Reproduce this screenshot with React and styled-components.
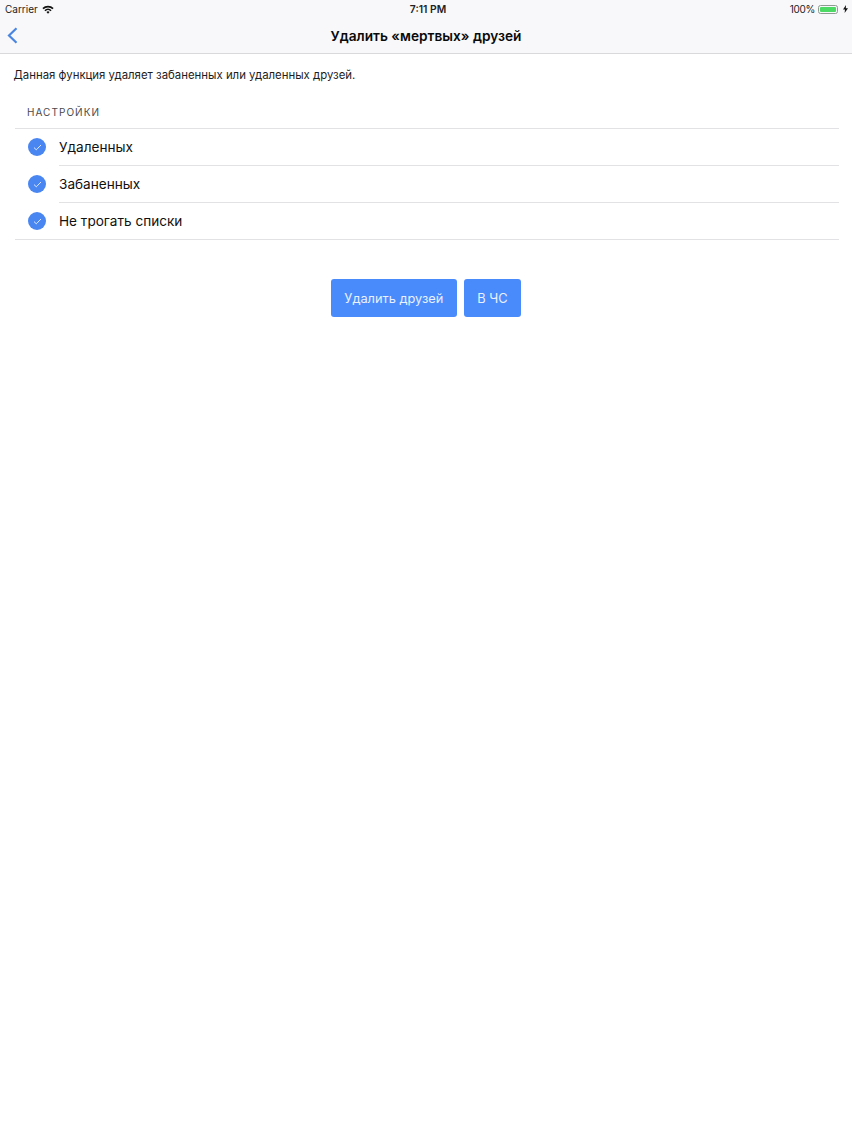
import React from 'react';
import styled, { createGlobalStyle } from 'styled-components';

const GlobalStyle = createGlobalStyle`
  html, body {
    margin: 0;
    padding: 0;
    background: #fff;
  }
  body {
    font-family: Inter, "Liberation Sans", sans-serif;
    color: #000;
  }
`;

const Page = styled.div`
  width: 852px;
  height: 1136px;
  overflow: hidden;
  background: #fff;
`;

const Header = styled.header`
  height: 53px;
  background: #f8f8fa;
  border-bottom: 1px solid #d9d9dc;
`;

const StatusBar = styled.div`
  height: 18px;
  padding: 0 4px 0 5px;
  display: grid;
  grid-template-columns: 1fr auto 1fr;
  align-items: center;
  font-size: 10px;
  color: #222;
`;

const StatusLeft = styled.div`
  display: flex;
  align-items: center;
  gap: 4px;
`;

const StatusTime = styled.div`
  margin-left: 3px;
  font-size: 10.3px;
  font-weight: 600;
`;

const StatusRight = styled.div`
  display: flex;
  align-items: center;
  justify-content: flex-end;
  gap: 2.5px;
  letter-spacing: -0.3px;
`;

const Battery = styled.div`
  width: 20px;
  height: 9px;
  margin-right: 3px;
  padding: 1px;
  box-sizing: border-box;
  border: 1px solid #8f9a90;
  border-radius: 2.5px;

  &::before {
    content: '';
    display: block;
    height: 100%;
    border-radius: 1px;
    background: #4cd964;
  }
`;

const NavBar = styled.div`
  height: 35px;
  display: grid;
  grid-template-columns: 60px 1fr 60px;
  align-items: center;
`;

const BackButton = styled.button`
  width: 26px;
  height: 35px;
  padding: 0 0 0 7px;
  display: flex;
  align-items: center;
  background: none;
  border: 0;
`;

const Title = styled.h1`
  margin: 0;
  font-size: 13.7px;
  font-weight: 600;
  text-align: center;
  color: #0a0a0a;
`;

const Intro = styled.p`
  margin: 0;
  padding: 14px 0 0 13.5px;
  font-size: 11.4px;
  line-height: 14px;
  color: #1d1d1f;
`;

const SectionLabel = styled.div`
  padding: 23px 0 0 27px;
  height: 23px;
  font-size: 10px;
  line-height: 15px;
  letter-spacing: 1.05px;
  color: #4a4a4d;
`;

const List = styled.ul`
  margin: 0 13px 0 15px;
  padding: 0;
  list-style: none;
  border-top: 1px solid #e2e2e4;
  border-bottom: 1px solid #e2e2e4;
`;

const Row = styled.li`
  height: ${p => (p.$last ? '36px' : '37px')};
  display: flex;
  align-items: center;
  padding-left: 13px;
  gap: 13px;
`;

const RowLabel = styled.div`
  flex: 1;
  height: 100%;
  display: flex;
  align-items: center;
  font-size: 13.6px;
  color: #111;
  border-bottom: ${p => (p.$last ? '0' : '1px solid #e2e2e4')};
  box-sizing: border-box;
`;

const Check = styled.span`
  width: 18px;
  height: 18px;
  flex: none;
  margin-bottom: ${p => (p.$last ? '0' : '1px')};
  display: flex;
  align-items: center;
  justify-content: center;
  border-radius: 50%;
  background: #4a86f2;
`;

const Actions = styled.div`
  margin-top: 39px;
  display: flex;
  justify-content: center;
  gap: 7px;
`;

const ActionButton = styled.button`
  height: 38px;
  padding: 0 13.5px;
  border: 0;
  border-radius: 3px;
  background: #4a8bfb;
  color: #e9f1ff;
  font-family: inherit;
  font-size: 12.8px;
`;

const options = ['Удаленных', 'Забаненных', 'Не трогать списки'];

const App = () => (
  <Page>
    <GlobalStyle />
    <Header>
      <StatusBar>
        <StatusLeft>
          Carrier
          <svg width="12" height="9" viewBox="0 0 13 9">
            <path d="M0.4 3 A8.6 8.6 0 0 1 12.6 3 L11.3 4.3 A6.8 6.8 0 0 0 1.7 4.3 Z" fill="#111" />
            <path d="M2.6 5.2 A5.4 5.4 0 0 1 10.4 5.2 L9.1 6.5 A3.6 3.6 0 0 0 3.9 6.5 Z" fill="#111" />
            <path d="M4.8 7.3 A2.4 2.4 0 0 1 8.2 7.3 L6.5 9 Z" fill="#111" />
          </svg>
        </StatusLeft>
        <StatusTime>7:11 PM</StatusTime>
        <StatusRight>
          100%
          <Battery />
          <svg width="5" height="8" viewBox="0 0 5 8">
            <path d="M3 0 L0 4.6 H2 L1.6 8 L5 3.2 H2.8 Z" fill="#111" />
          </svg>
        </StatusRight>
      </StatusBar>
      <NavBar>
        <BackButton aria-label="Назад">
          <svg width="11" height="17" viewBox="0 0 11 17">
            <path d="M9.5 1.2 L2 8.5 L9.5 15.8" fill="none" stroke="#4a86e0" strokeWidth="2.2" />
          </svg>
        </BackButton>
        <Title>Удалить «мертвых» друзей</Title>
      </NavBar>
    </Header>
    <Intro>Данная функция удаляет забаненных или удаленных друзей.</Intro>
    <SectionLabel>НАСТРОЙКИ</SectionLabel>
    <List>
      {options.map((option, idx) => {
        const last = idx === options.length - 1;
        return (
          <Row key={option} $last={last}>
            <Check $last={last}>
              <svg width="9" height="7" viewBox="0 0 9 7">
                <path d="M1 3.6 L3.3 5.8 L8 1" fill="none" stroke="#dce8ff" strokeWidth="1" />
              </svg>
            </Check>
            <RowLabel $last={last}>{option}</RowLabel>
          </Row>
        );
      })}
    </List>
    <Actions>
      <ActionButton>Удалить друзей</ActionButton>
      <ActionButton>В ЧС</ActionButton>
    </Actions>
  </Page>
);

export default App;
